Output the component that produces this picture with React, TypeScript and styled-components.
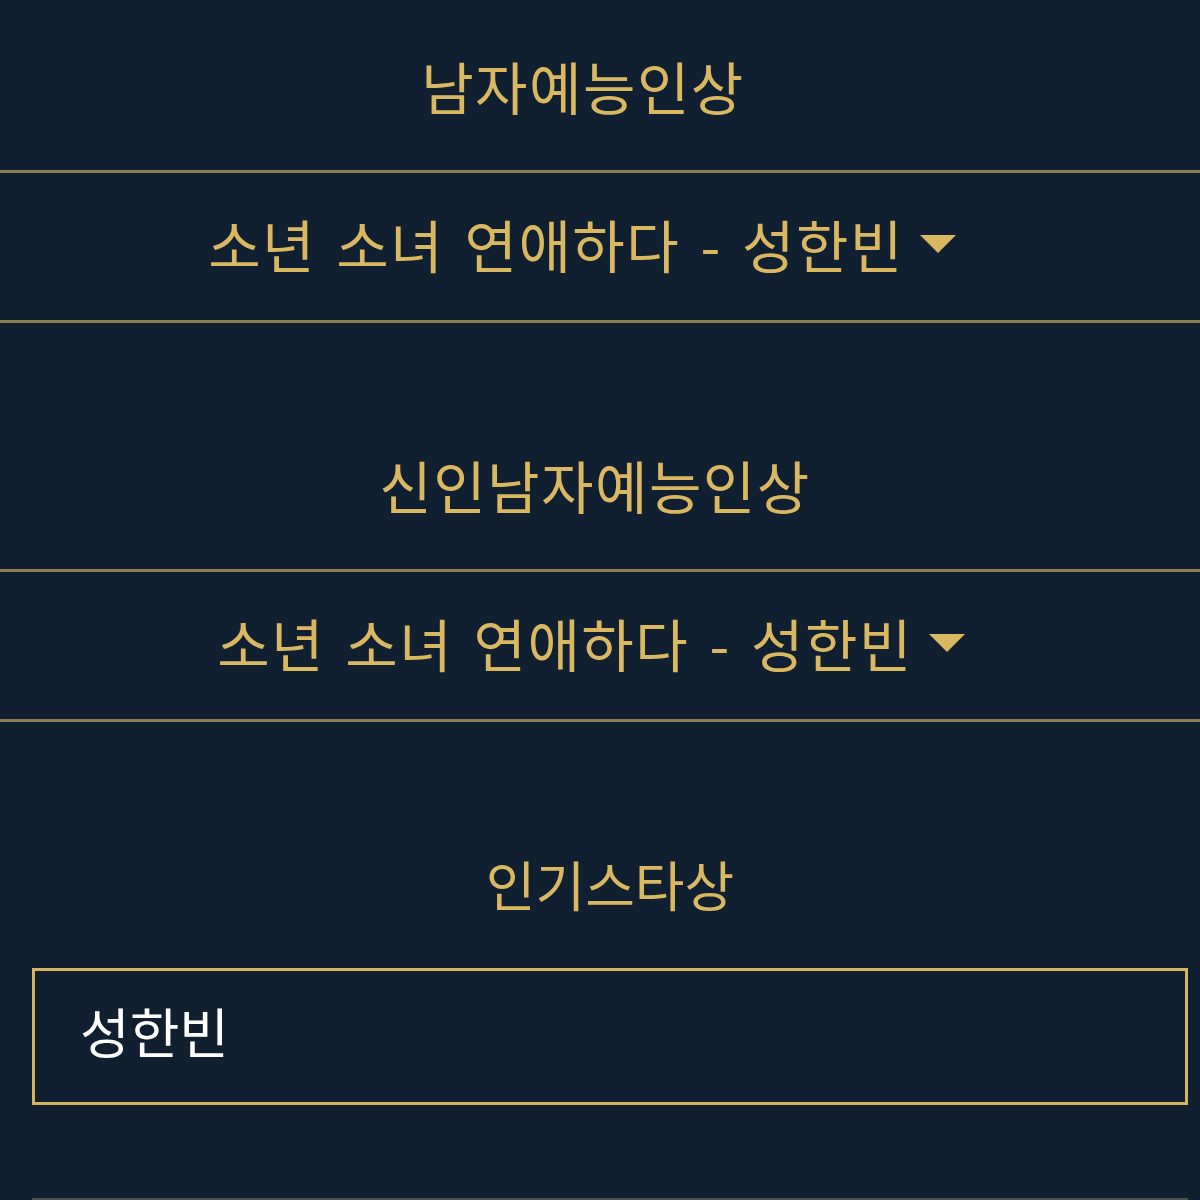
import styled, { createGlobalStyle } from 'styled-components';

const GlobalStyle = createGlobalStyle`
  html, body {
    margin: 0;
    padding: 0;
    background: #112031;
  }
  body {
    font-family: "Noto Sans CJK KR", "Noto Sans", sans-serif;
  }
`;

const Page = styled.div`
  width: 1200px;
  height: 1200px;
  overflow: hidden;
  background: #112031;
  display: flex;
  flex-direction: column;
  gap: 76px;
`;

const Section = styled.section`
  display: flex;
  flex-direction: column;
`;

// $left / $right nudge the centred text, the original isn't perfectly centred
const Title = styled.h2<{ $left?: number; $right?: number; $small?: boolean }>`
  margin: 0;
  height: 170px;
  display: flex;
  align-items: center;
  justify-content: center;
  padding: 0 ${(p) => p.$right ?? 0}px 0 ${(p) => p.$left ?? 0}px;
  color: #dab862;
  font-size: ${(p) => (p.$small ? 54 : 57)}px;
  font-weight: 400;
  letter-spacing: ${(p) => (p.$small ? 0 : 1.5)}px;
`;

const SelectRow = styled.div<{ $right?: number }>`
  box-sizing: content-box;
  height: 139px;
  border-top: 3px solid #8b7f52;
  border-bottom: 3px solid #8b7f52;
  display: flex;
  align-items: center;
  justify-content: center;
  gap: 16px;
  padding: 0 ${(p) => p.$right ?? 0}px 8px 0;
  color: #dab862;
  font-size: 57px;
  letter-spacing: 1.5px;
  word-spacing: 6px;
  cursor: pointer;
`;

const Caret = styled.span`
  width: 0;
  height: 0;
  border-left: 18px solid transparent;
  border-right: 18px solid transparent;
  border-top: 18px solid #dab862;
  margin-top: 2px;
`;

const InputWrap = styled.div`
  padding: 0 12px 0 32px;
`;

const TextBox = styled.div`
  box-sizing: content-box;
  height: 119px;
  border: 3px solid #d6b45f;
  display: flex;
  align-items: center;
  padding: 0 0 12px 45px;
  color: #ffffff;
  font-size: 54px;
`;

const BottomRule = styled.div`
  margin: 93px 12px 0 32px;
  height: 2px;
  background: #4a5350;
`;

const App = () => {
  return (
    <>
      <GlobalStyle />
      <Page>
        <Section>
          <Title $right={34}>남자예능인상</Title>
          <SelectRow $right={36}>
            <span>소년 소녀 연애하다 - 성한빈</span>
            <Caret />
          </SelectRow>
        </Section>
        <Section>
          <Title $right={10}>신인남자예능인상</Title>
          <SelectRow $right={18}>
            <span>소년 소녀 연애하다 - 성한빈</span>
            <Caret />
          </SelectRow>
        </Section>
        <Section>
          <Title $left={20} $small>인기스타상</Title>
          <InputWrap>
            <TextBox>성한빈</TextBox>
          </InputWrap>
          <BottomRule />
        </Section>
      </Page>
    </>
  );
};

export default App;
